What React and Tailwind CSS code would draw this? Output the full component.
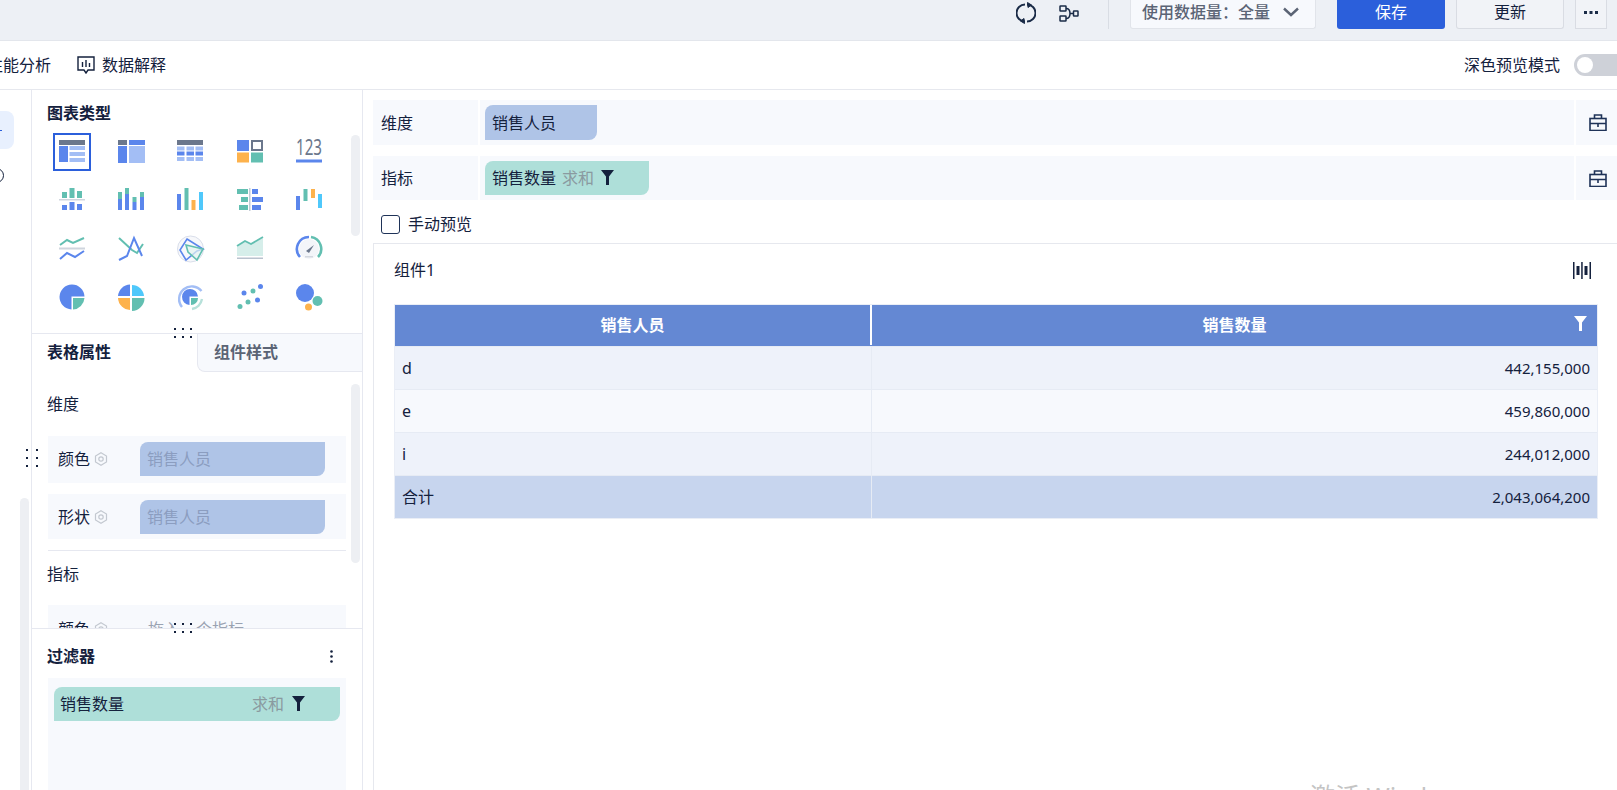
const BLUE = '#5b86ec';
const LIGHT = '#a3bef5';
const GRAY = '#6b778c';
const TEAL = '#62bfb1';
const ORANGE = '#fdb24c';
const CYAN = '#4fc8fb';

const R = ({ x, y, w, h, c }) => <rect x={x} y={y} width={w} height={h} fill={c} />;

const chartIcons = [
  <>
    <R x={0} y={1} w={26} h={5} c={GRAY} />
    <R x={0} y={7} w={9} h={16} c={BLUE} />
    <R x={10.5} y={7} w={15.5} h={4} c={LIGHT} />
    <R x={10.5} y={13} w={15.5} h={4} c={LIGHT} />
    <R x={10.5} y={19} w={15.5} h={4} c={LIGHT} />
  </>,
  <>
    <R x={0} y={1} w={9} h={5} c={GRAY} />
    <R x={11} y={1} w={16} h={5} c={BLUE} />
    <R x={0} y={7} w={9} h={17} c={BLUE} />
    <R x={11} y={7} w={16} h={17} c={LIGHT} />
  </>,
  <>
    <R x={0} y={1} w={26} h={5} c={GRAY} />
    {[7.5, 12.5, 18].map((y, i) =>
      [0, 9.5, 18.5].map((x) => (
        <R key={`${x}-${y}`} x={x} y={y} w={7.5} h={4} c={i === 1 ? BLUE : LIGHT} />
      )),
    )}
  </>,
  <>
    <R x={0} y={1} w={12} h={11} c={BLUE} />
    <rect x={15} y={2} width={10} height={9} fill="none" stroke={GRAY} strokeWidth="2" />
    <R x={0} y={13.5} w={12} h={10} c={ORANGE} />
    <R x={14} y={13.5} w={12} h={10} c={TEAL} />
  </>,
  <>
    <text x={0} y={16} fontSize="21" fill={GRAY} textLength="26" lengthAdjust="spacingAndGlyphs">123</text>
    <R x={0} y={20.5} w={26} h={3} c={BLUE} />
  </>,
  <>
    <R x={3} y={5} w={5} h={6} c={TEAL} />
    <R x={10.5} y={1} w={5} h={10} c={TEAL} />
    <R x={18} y={4} w={5} h={7} c={TEAL} />
    <R x={0} y={12} w={26} h={1.5} c="#cfd5de" />
    <R x={3} y={18} w={5} h={5} c={BLUE} />
    <R x={10.5} y={15} w={5} h={8} c={BLUE} />
    <R x={18} y={17} w={5} h={6} c={BLUE} />
  </>,
  <>
    <R x={0} y={5} w={4} h={7} c={TEAL} />
    <R x={0} y={12} w={4} h={11} c={BLUE} />
    <R x={7} y={1} w={4} h={6} c={TEAL} />
    <R x={7} y={7} w={4} h={16} c={BLUE} />
    <R x={14.5} y={10} w={4} h={5} c={TEAL} />
    <R x={14.5} y={15} w={4} h={8} c={BLUE} />
    <R x={22} y={5} w={4} h={5} c={TEAL} />
    <R x={22} y={10} w={4} h={13} c={BLUE} />
  </>,
  <>
    <R x={0} y={7} w={4} h={16} c={BLUE} />
    <R x={7.5} y={1} w={4} h={22} c={TEAL} />
    <R x={14.5} y={13} w={4} h={10} c={ORANGE} />
    <R x={22} y={5} w={4} h={18} c={CYAN} />
  </>,
  <>
    <R x={0} y={2} w={11} h={5} c={TEAL} />
    <R x={4} y={10} w={7} h={5} c={TEAL} />
    <R x={2} y={18} w={9} h={5} c={TEAL} />
    <R x={12} y={1} w={1.5} h={23} c="#c4ccd6" />
    <R x={15} y={2} w={6} h={5} c={BLUE} />
    <R x={15} y={10} w={11} h={5} c={BLUE} />
    <R x={15} y={18} w={9} h={5} c={BLUE} />
  </>,
  <>
    <R x={0} y={9} w={4} h={14} c={BLUE} />
    <R x={7.5} y={2} w={4} h={12} c={TEAL} />
    <R x={15} y={2} w={4} h={9} c={ORANGE} />
    <R x={22} y={7} w={4} h={14} c={CYAN} />
  </>,
  <>
    <polyline points="1,9 8,4 14,7 25,2" fill="none" stroke={TEAL} strokeWidth="2" />
    <R x={0} y={11.5} w={26} h={2} c="#cfd5de" />
    <polyline points="1,23 8,17 16,21 25,15" fill="none" stroke={BLUE} strokeWidth="2" />
  </>,
  <>
    <polyline points="1,2 14,14 19,17 25,8" fill="none" stroke={TEAL} strokeWidth="2" />
    <polyline points="1,24 9,20 16,2 24,20" fill="none" stroke={BLUE} strokeWidth="2" />
  </>,
  <>
    <circle cx="13.5" cy="13" r="13" fill="#f7f8fb" stroke="#d9deea" strokeWidth="1" />
    <polygon points="10,3 26,13 20,15 9,24 3,14" fill="none" stroke={BLUE} strokeWidth="1.6" />
    <polygon points="9,9 26,13 20,24 11,16" fill="#e2f3f0" fillOpacity="0.7" stroke={TEAL} strokeWidth="1.6" />
  </>,
  <>
    <polygon points="0,11 8,5 14,8 26,2 26,20 0,20" fill="#d6eeea" />
    <polyline points="0,10 8,5 14,8 26,1" fill="none" stroke={TEAL} strokeWidth="1.8" />
    <R x={0} y={21.5} w={26} h={1.5} c="#b9c2ce" />
  </>,
  <>
    <circle cx="13" cy="13" r="10" fill="#f3f5f9" />
    <path d="M4 21 A12 12 0 0 1 13 1" fill="none" stroke={BLUE} strokeWidth="2.6" />
    <path d="M15 1 A12 12 0 0 1 22 21" fill="none" stroke={TEAL} strokeWidth="2.6" />
    <path d="M10 15 L18 9 L13 17 Z" fill={GRAY} />
    <R x={9} y={20} w={8} h={1.5} c="#d3d8e0" />
  </>,
  <>
    <path d="M12.5 25.5 A12.5 12.5 0 1 1 25.5 12.5 H12.5 Z" fill={BLUE} />
    <path d="M14 14 H25.5 A12.5 12.5 0 0 1 14 25.5 Z" fill={TEAL} />
  </>,
  <>
    <path d="M12 0.5 A12.5 12.5 0 0 0 0 12 H12 Z" fill={BLUE} />
    <path d="M14 1 A12 12 0 0 1 26 12 H14 Z" fill={CYAN} />
    <path d="M0 14 H12 V26 A12.5 12.5 0 0 1 0 14 Z" fill={ORANGE} />
    <path d="M14 14 H26.5 A13 13 0 0 1 14 27 Z" fill={TEAL} />
  </>,
  <>
    <path d="M5 23 A12.5 12.5 0 0 1 24.5 7" fill="none" stroke={LIGHT} strokeWidth="2.4" />
    <path d="M25 15 A12.5 12.5 0 0 1 15 25" fill="none" stroke="#b7e1da" strokeWidth="2.4" />
    <path d="M12.5 21 A8 8 0 1 1 21 12.5 H12.5 Z" fill={BLUE} />
    <path d="M14 14 H21 A7 7 0 0 1 14 21 Z" fill={TEAL} />
  </>,
  <>
    <circle cx="23.5" cy="2.5" r="2.5" fill={BLUE} />
    <circle cx="16" cy="7" r="2.5" fill={TEAL} />
    <circle cx="7" cy="9" r="2.5" fill={BLUE} />
    <circle cx="20.5" cy="16" r="2.5" fill={BLUE} />
    <circle cx="11" cy="18" r="2.5" fill={TEAL} />
    <circle cx="3" cy="22.5" r="2.5" fill={TEAL} />
  </>,
  <>
    <circle cx="9" cy="9" r="9" fill={BLUE} />
    <circle cx="21.5" cy="17" r="5" fill={TEAL} />
    <circle cx="12.5" cy="23" r="3.5" fill={ORANGE} />
  </>,
];

const Funnel = ({ color = '#14213d', className = 'w-[13px] h-[15px]' }) => (
  <svg viewBox="0 0 13 15" className={className}>
    <path d="M0 0 H13 L8 6.5 V15 H5 V6.5 Z" fill={color} />
  </svg>
);

const Gear = () => (
  <svg viewBox="0 0 14 14" className="w-[14px] h-[14px] ml-[4px]" fill="none" stroke="#c3c8d0" strokeWidth="1.2">
    <polygon points="7,0.8 12.5,4 12.5,10 7,13.2 1.5,10 1.5,4" />
    <circle cx="7" cy="7" r="2.2" />
  </svg>
);

const Toolbox = () => (
  <svg viewBox="0 0 18 17" className="w-[18px] h-[17px] ml-[3px]" fill="none" stroke="#1f3358" strokeWidth="1.6">
    <rect x="1" y="4.5" width="16" height="12" />
    <path d="M5.5 4.5 V1 H12.5 V4.5" />
    <path d="M1 9.5 H17 M9 9.5 V13" />
  </svg>
);

const Dots = ({ cols, className }) => (
  <div className={`absolute grid gap-x-[6px] gap-y-[6px] ${cols === 3 ? 'grid-cols-3' : 'grid-cols-2'} ${className}`}>
    {Array.from({ length: 6 }).map((_, i) => (
      <span key={i} className="w-[2px] h-[2px] bg-[#14213d]" />
    ))}
  </div>
);

const Chip = ({ color, className, children }) => (
  <div className={`flex items-center rounded-tl-lg rounded-br-lg ${color} ${className}`}>{children}</div>
);

const FieldRow = ({ label, chip }) => (
  <div className="flex items-start h-full bg-[#f7f9fd] pl-[10px] pt-[6px]">
    <span className="flex items-center w-[82px] h-[34px] text-[#14213d]">
      {label}
      <Gear />
    </span>
    {chip}
  </div>
);

const PersonChip = () => (
  <Chip color="bg-[#afc4e7]" className="w-[185px] h-[34px] pl-[7px] text-[#8b9dc0]">销售人员</Chip>
);

const DropRow = ({ label, className, children }) => (
  <div className={`flex bg-[#f7f9fd] text-[#14213d] ${className}`}>
    <div className="w-[105px] pl-[8px] flex items-center">{label}</div>
    <div className="flex-1 border-l-2 border-r-2 border-white pl-[5px] flex items-center">{children}</div>
    <div className="w-[41px] flex items-center justify-center">
      <Toolbox />
    </div>
  </div>
);

const rows = [
  { name: 'd', value: '442,155,000', bg: 'bg-[#eef2fa]' },
  { name: 'e', value: '459,860,000', bg: 'bg-[#f7f9fd]' },
  { name: 'i', value: '244,012,000', bg: 'bg-[#eef2fa]' },
  { name: '合计', value: '2,043,064,200', bg: 'bg-[#c7d5ee]' },
];

export default function App() {
  return (
    <div className="relative w-[1617px] h-[790px] overflow-hidden bg-white text-[16px] leading-none font-['Noto_Sans','Noto_Sans_CJK_SC',sans-serif]">
      {/* top bar */}
      <div className="flex justify-end h-[41px] bg-[#edf0f5] border-b border-[#e3e6ec] pr-[10px]">
        <div className="flex items-start">
          <svg viewBox="0 0 20 22" className="w-[20px] h-[22px] mt-[2px]" fill="none" stroke="#1a2b47" strokeWidth="1.9">
            <path d="M9 2.5 A8.5 8.5 0 0 0 9 19.5" />
            <path d="M11 2.5 A8.5 8.5 0 0 1 11 19.5" />
            <path d="M11.5 0.5 L15.5 3 L12 5.5 Z" fill="#1a2b47" strokeWidth="1" />
            <path d="M8.5 21.5 L4.5 19 L8 16.5 Z" fill="#1a2b47" strokeWidth="1" />
          </svg>
          <svg viewBox="0 0 20 17" className="w-[20px] h-[17px] mt-[5px] ml-[23px]" fill="none" stroke="#1a2b47" strokeWidth="1.5">
            <rect x="1" y="1" width="6" height="5" rx="0.5" />
            <rect x="1" y="11" width="6" height="5" rx="0.5" />
            <rect x="14.5" y="6" width="4.5" height="5" rx="0.5" />
            <path d="M7 3.5 Q11 3.5 11 8.5 H14.5 M7 13.5 Q11 13.5 11 8.5" />
          </svg>
          <div className="w-px h-[29px] bg-[#d9dde4] ml-[29px]" />
          <div className="flex items-center w-[186px] h-[29px] pb-[5px] ml-[21px] pl-[11px] bg-[#f7f9fd] border-b border-x border-[#e1e4ea] rounded-b-[3px] font-medium text-[#5b6475]">
            使用数据量：全量
            <svg viewBox="0 0 16 10" className="w-[16px] h-[10px] ml-[13px]" fill="none" stroke="#5b6475" strokeWidth="2.4">
              <path d="M1 1.5 L8 8 L15 1.5" />
            </svg>
          </div>
          <button type="button" className="w-[108px] h-[29px] pb-[5px] ml-[21px] rounded-b-[3px] bg-[#2b5fdb] text-white">保存</button>
          <button type="button" className="w-[108px] h-[29px] pb-[5px] ml-[11px] rounded-b-[3px] bg-[#f1f3f7] border-x border-b border-[#d9dce3] text-[#14213d]">更新</button>
          <button type="button" className="flex items-center justify-center w-[32px] h-[29px] pb-[3px] ml-[11px] bg-[#f1f3f7] border-x border-b border-[#d9dce3]">
            <svg viewBox="0 0 14 4" className="w-[14px] h-[4px]" fill="#1a2b47">
              <rect x="0" y="0" width="3" height="3" />
              <rect x="5.5" y="0" width="3" height="3" />
              <rect x="11" y="0" width="3" height="3" />
            </svg>
          </button>
        </div>
      </div>

      {/* sub bar */}
      <div className="flex items-center h-[49px] border-b border-[#e6e8ee] text-[#14213d]">
        <span className="ml-[-13px]">性能分析</span>
        <svg viewBox="0 0 18 18" className="w-[18px] h-[18px] ml-[26px]" fill="none" stroke="#14213d" strokeWidth="1.4">
          <path d="M1 1 H17 V14 H11 L9 17 L7 14 H1 Z" />
          <path d="M5.5 6 V11 M9 4 V11 M12.5 7 V11" />
        </svg>
        <span className="ml-[7px]">数据解释</span>
        <span className="ml-auto">深色预览模式</span>
        <div className="flex items-center w-[43px] h-[22px] ml-[14px] pl-[3px] rounded-l-full bg-[#ced1d8]">
          <span className="w-[16px] h-[16px] rounded-full bg-white" />
        </div>
      </div>

      <div className="flex h-[700px]">
        {/* left rail */}
        <div className="flex flex-col w-[31px] shrink-0 overflow-hidden">
          <div className="flex items-center w-[14px] h-[38px] mt-[21px] rounded-r-lg bg-[#e8f0fe]">
            <span className="w-[2px] h-px bg-[#2b5fdb]" />
          </div>
          <span className="w-[15px] h-[15px] ml-[-11px] mt-[19px] rounded-full border border-[#14213d]" />
          <div className="w-[9px] h-[292px] mt-auto ml-[20px] rounded-t-lg bg-[#edeff3]" />
        </div>

        {/* config panel */}
        <div className="relative flex flex-col w-[332px] shrink-0 border-x border-[#e6e8f0]">
          <div className="relative h-[244px] shrink-0 border-b border-[#e6e8f0]">
            <div className="pl-[15px] pt-[15px] font-bold text-[#14213d]">图表类型</div>
            <div className="grid grid-cols-[repeat(5,38px)] auto-rows-[38px] gap-x-[21.2px] gap-y-[10.4px] ml-[21px] mt-[12px]">
              {chartIcons.map((icon, i) => (
                <div key={i} className={`flex items-center justify-center ${i === 0 ? 'border-2 border-[#2b5fdb]' : ''}`}>
                  <svg viewBox="0 0 26 26" className="w-[26px] h-[26px] overflow-visible">{icon}</svg>
                </div>
              ))}
            </div>
            <div className="absolute left-[319px] top-[45px] w-[9px] h-[101px] rounded-lg bg-[#edeff3]" />
          </div>

          <div className="relative h-[295px] shrink-0 overflow-hidden border-b border-[#e6e8f0]">
            <div className="flex h-[38px]">
              <div className="w-[165px] pl-[15px] pt-[10px] font-bold text-[#14213d]">表格属性</div>
              <div className="flex-1 pl-[16px] pt-[10px] font-bold text-[#5b6475] bg-[#f7f9fd] border-l border-b border-[#e6e8f0] rounded-bl-lg">组件样式</div>
            </div>
            <div className="ml-[16px] w-[298px]">
              <div className="mt-[24px] h-[17px] -ml-px text-[#14213d]">维度</div>
              <div className="mt-[23px] h-[47px]"><FieldRow label="颜色" chip={<PersonChip />} /></div>
              <div className="mt-[11px] h-[45px]"><FieldRow label="形状" chip={<PersonChip />} /></div>
              <div className="mt-[11px] h-px bg-[#e6e8f0]" />
              <div className="mt-[15px] h-[16px] -ml-px text-[#14213d]">指标</div>
              <div className="mt-[23px] h-[47px]">
                <div className="flex items-center h-full bg-[#f7f9fd] pl-[10px]">
                  <span className="flex items-center w-[82px] text-[#14213d]">颜色<Gear /></span>
                  <span className="pl-[8px] text-[#9aa3b2]">拖入一个指标</span>
                </div>
              </div>
            </div>
            <div className="absolute left-[319px] top-[50px] w-[9px] h-[179px] rounded-lg bg-[#edeff3]" />
          </div>

          <div className="flex-1 flex flex-col min-h-0">
            <div className="flex items-center justify-between h-[49px] shrink-0 pt-[5px] pl-[15px] pr-[29px] font-bold text-[#14213d]">
              过滤器
              <svg viewBox="0 0 3 13" className="w-[3px] h-[13px]" fill="#14213d">
                <circle cx="1.5" cy="1.5" r="1.3" />
                <circle cx="1.5" cy="6.5" r="1.3" />
                <circle cx="1.5" cy="11.5" r="1.3" />
              </svg>
            </div>
            <div className="flex-1 ml-[16px] w-[298px] bg-[#f7f9fd] px-[6px] pt-[9px]">
              <Chip color="bg-[#aedfd9]" className="h-[34px] pl-[6px] text-[#14213d]">
                销售数量
                <span className="ml-[128px] text-[#8a9aa0]">求和</span>
                <Funnel className="w-[13px] h-[15px] ml-[8px] mb-[2px]" />
              </Chip>
            </div>
          </div>

          <Dots cols={2} className="left-[-6px] top-[359px] !gap-x-[8px]" />
          <Dots cols={3} className="left-[142px] top-[238px]" />
          <Dots cols={3} className="left-[142px] top-[533px]" />
        </div>

        {/* preview */}
        <div className="flex-1 min-w-0 flex flex-col pl-[10px] pt-[10px]">
          <DropRow label="维度" className="h-[45px]">
            <Chip color="bg-[#afc4e7]" className="w-[112px] h-[35px] pl-[7px]">销售人员</Chip>
          </DropRow>
          <DropRow label="指标" className="h-[44px] mt-[11px]">
            <Chip color="bg-[#aedfd9]" className="w-[164px] h-[34px] pl-[7px]">
              销售数量
              <span className="ml-[6px] text-[#8a9aa0]">求和</span>
              <Funnel className="w-[13px] h-[15px] ml-[7px] mb-[2px]" />
            </Chip>
          </DropRow>
          <div className="flex items-start h-[43px] pt-[15px] pl-[8px] text-[#14213d]">
            <span className="w-[19px] h-[19px] rounded-[3px] border border-[#1f3358] bg-white" />
            <span className="ml-[8px] mt-[1px]">手动预览</span>
          </div>
          <div className="flex-1 border-t border-l border-[#e6e8ee] pl-[20px] pr-[19px]">
            <div className="flex items-center justify-between h-[60px] pb-[8px] text-[#14213d]">
              组件1
              <svg viewBox="0 0 18 17" className="w-[18px] h-[17px] mr-[7px]" fill="#14213d">
                <rect x="0" y="0" width="1.5" height="17" />
                <rect x="3.5" y="4" width="3" height="9" />
                <rect x="8.2" y="0" width="1.5" height="17" />
                <rect x="11.5" y="4" width="3" height="9" />
                <rect x="16.5" y="0" width="1.5" height="17" />
              </svg>
            </div>
            <div className="border border-[#eaeef6] font-normal">
              <div className="grid grid-cols-[477px_1fr] h-[41px] pb-px bg-[#6488d3] text-white font-bold">
                <div className="flex items-center justify-center border-r-2 border-white">销售人员</div>
                <div className="relative flex items-center justify-center">
                  销售数量
                  <Funnel color="#ffffff" className="absolute right-[10px] top-[11px] w-[13px] h-[15px]" />
                </div>
              </div>
              {rows.map((row) => (
                <div key={row.name} className={`grid grid-cols-[477px_1fr] h-[43px] border-t border-[#e6ebf4] text-[#14213d] ${row.bg}`}>
                  <div className="flex items-center pl-[7px] border-r border-[#e6ebf4]">{row.name}</div>
                  <div className="flex items-center justify-end pr-[7px] text-[15px]">{row.value}</div>
                </div>
              ))}
            </div>
          </div>
        </div>
      </div>

      {/* activation watermark, cut off by the window edge */}
      <div className="absolute left-[1310px] top-[781px] text-[25px] leading-[30px] text-[#c4c4c4] whitespace-nowrap">激活 Windows</div>
    </div>
  );
}
